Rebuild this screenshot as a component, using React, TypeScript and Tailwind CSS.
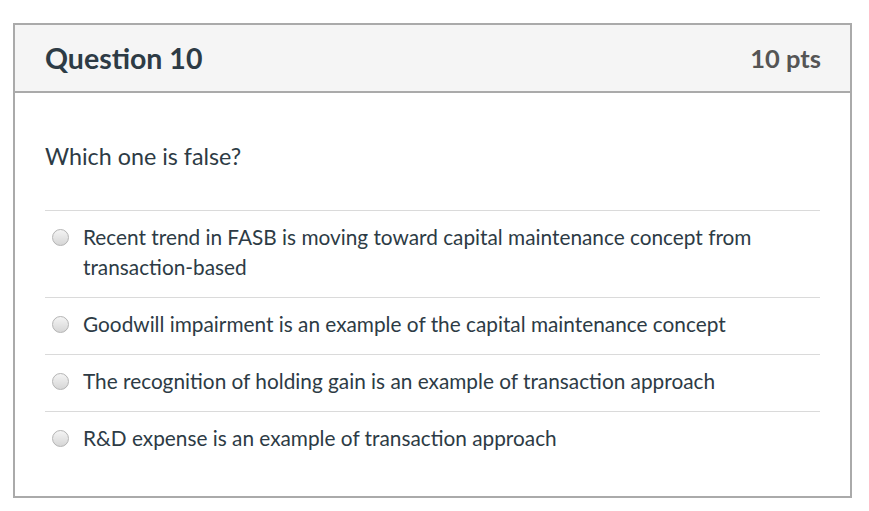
const options = [
  "Recent trend in FASB is moving toward capital maintenance concept from transaction-based",
  "Goodwill impairment is an example of the capital maintenance concept",
  "The recognition of holding gain is an example of transaction approach",
  "R&D expense is an example of transaction approach",
];

function Radio() {
  return (
    <span className="mt-[7px] inline-block h-[17px] w-[17px] shrink-0 rounded-full border border-[#b4b4b4] bg-gradient-to-b from-[#f4f4f4] to-[#d6d6d6]" />
  );
}

export default function App() {
  return (
    <div
      className="min-h-[511px] w-[869px] bg-white pl-[13px] pt-[23px]"
      style={{ fontFamily: "Lato, 'Open Sans', sans-serif" }}
    >
      <div className="w-[839px] border-2 border-[#aaaaaa] text-[#2d3b45]">
        <div className="flex h-[68px] items-center justify-between border-b-2 border-[#aaaaaa] bg-[#f5f5f5] pl-[30px] pr-[29px]">
          <h2 className="text-[28.5px] font-bold">Question 10</h2>
          <span className="text-[25.5px] font-bold text-[#555555]">10 pts</span>
        </div>
        <div className="px-[30px] pb-[28px] pt-[48px]">
          <p className="text-[23.3px] leading-[30px]">Which one is false?</p>
          <div className="mt-[39px]">
            {options.map((o) => (
              <div
                key={o}
                className="flex gap-[5px] border-t border-[#dadada] pb-[15px] pl-[7px] pt-[11px]"
              >
                <Radio />
                <span className="pl-[9px] pr-[50px] text-[20.8px] leading-[30px]">{o}</span>
              </div>
            ))}
          </div>
        </div>
      </div>
    </div>
  );
}
